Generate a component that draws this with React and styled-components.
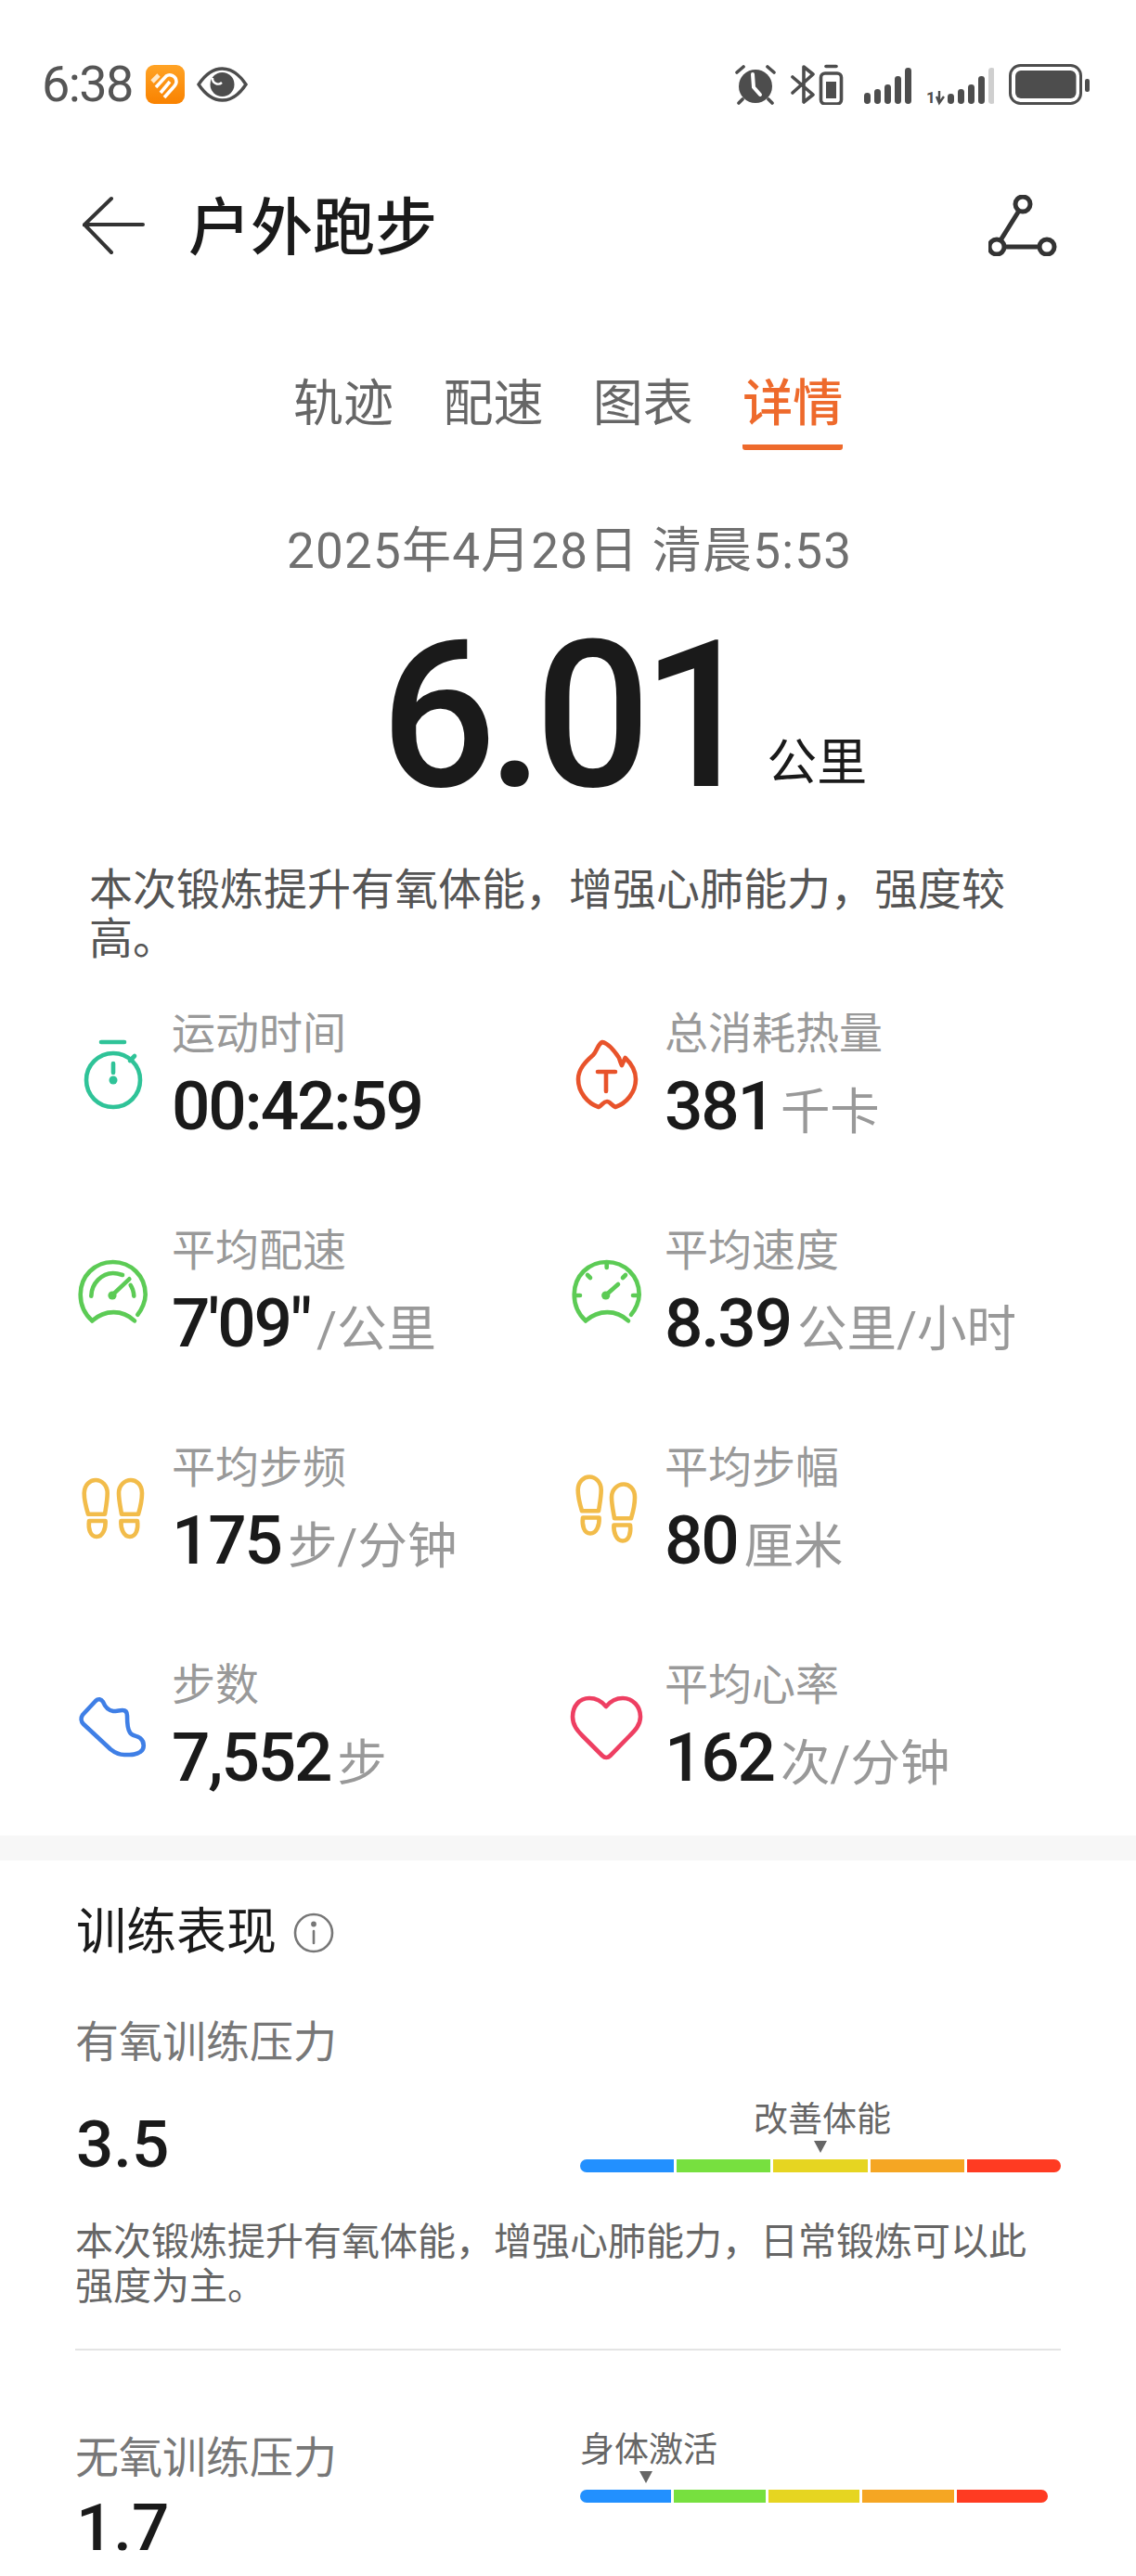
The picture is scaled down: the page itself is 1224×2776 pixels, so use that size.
import React from "react";
import styled, { createGlobalStyle } from "styled-components";

const Global = createGlobalStyle`
  html, body { margin: 0; padding: 0; background: #fff; }
  body { font-family: Roboto, "Noto Sans CJK SC", sans-serif; color: #1a1a1a; }
  * { box-sizing: border-box; }
`;
const Page = styled.div`
  width: 1224px; height: 2776px; overflow: hidden; background: #fff;
`;
const StatusBar = styled.div`
  height: 182px; padding: 0 49px 0 45px; display: flex; align-items: center; justify-content: space-between;
`;
const StatusGroup = styled.div`display: flex; align-items: center; gap: ${p => p.$gap}px;`;
const Time = styled.span`
  font-size: 54px; line-height: 60px; color: #555; letter-spacing: -1.6px; margin-right: 1px;
`;
const TopBar = styled.div`
  height: 122px; padding: 0 83px 0 89px; display: flex; align-items: center;
`;
const Title = styled.h1`
  margin: 0 0 0 47px; padding-top: 5px; font-size: 67px; line-height: 80px; font-weight: 500; color: #1a1a1a; flex: 1;
`;
const Tabs = styled.div`
  height: 181px; padding: 100px 0 0 316px; display: flex; gap: 53.4px; align-items: flex-start;
`;
const Tab = styled.div`
  font-size: 54px; line-height: 64px; height: 81px; white-space: nowrap;
  color: ${p => (p.$active ? "#EE6A2C" : "#666")};
  font-weight: ${p => (p.$active ? 500 : 400)};
  border-bottom: ${p => (p.$active ? "6px solid #EE6A2C" : "none")};
  border-radius: 0 0 3px 3px;
`;
const DateLine = styled.div`
  margin-top: 77px; padding-left: 309px; font-size: 53px; line-height: 64px; letter-spacing: 1.2px; color: #707070; white-space: nowrap;
`;
const Distance = styled.div`
  margin-top: 46px; height: 200px; padding-left: 410px; display: flex; align-items: flex-end;
`;
const DistanceValue = styled.span`
  font-size: 220px; line-height: 200px; font-weight: 500; letter-spacing: -10px; color: #1a1a1a;
`;
const DistanceUnit = styled.span`font-size: 54px; line-height: 60px; margin: 0 0 19px 20px; color: #1a1a1a;`;
const Summary = styled.p`
  margin: 60px 0 0; padding-left: 96px; width: 1100px; font-size: 47px; line-height: 53px; color: #555;
`;
const Metrics = styled.div`
  margin-top: 46px; padding-left: 82px; margin-bottom: 42px;
  display: grid; grid-template-columns: 531px 531px; grid-auto-rows: 150px; row-gap: 84px;
`;
const Metric = styled.div`display: flex; align-items: flex-start; gap: 23px;`;
const IconBox = styled.svg`
  width: 80px; height: 80px; margin-top: 35px; flex: none; overflow: visible;
  fill: none; stroke: ${p => p.$color}; stroke-width: 4.6; stroke-linecap: round; stroke-linejoin: round;
`;
const MetricText = styled.div`display: flex; flex-direction: column;`;
const MetricLabel = styled.div`font-size: 47px; line-height: 60px; color: #999; white-space: nowrap;`;
const MetricValueRow = styled.div`
  margin-top: 9px; height: 78px; display: flex; align-items: baseline; white-space: nowrap;
`;
const MetricValue = styled.span`font-size: 73px; line-height: 78px; font-weight: 500; color: #1a1a1a; letter-spacing: -2.2px;`;
const MetricUnit = styled.span`font-size: 53.5px; line-height: 60px; color: #999; margin-left: 7px;`;
const Band = styled.div`height: 27px; background: #f7f7f7;`;
const Section = styled.section`padding: 46px 81px 0;`;
const SectionTitle = styled.div`
  display: flex; align-items: center; gap: 18px; font-size: 54px; line-height: 64px; color: #1a1a1a; margin-left: 1px;
`;
const TrainLabel = styled.div`
  font-size: 47px; line-height: 60px; color: #777; white-space: nowrap; margin-top: ${p => p.$top || 0}px;
`;
const TrainRow = styled.div`
  display: flex; justify-content: space-between; align-items: flex-start;
  margin-top: ${p => p.$top}px; padding-right: ${p => p.$right}px;
`;
const TrainValue = styled.div`
  font-size: 71px; line-height: 90px; font-weight: 500; color: #1a1a1a; margin: ${p => p.$top || 0}px 0 0 1px;
`;
const TrainDesc = styled.p`
  margin: 36px 0 0; font-size: 41px; line-height: 48px; color: #666;
`;
const Divider = styled.hr`margin: 43px 0 0; border: 0; height: 1.5px; background: #e4e4e4;`;
const Gauge = styled.div`width: ${p => p.$w}px; flex: none;`;
const GaugeCaption = styled.div`
  font-size: 37px; line-height: 44px; color: #666; padding-left: ${p => p.$left}px; white-space: nowrap;
`;
const GaugeMark = styled.div`
  width: 0; height: 0; margin: ${p => p.$top}px 0 0 ${p => p.$left}px;
  border-left: 7px solid transparent; border-right: 7px solid transparent; border-top: 13px solid #666;
`;
const GaugeBar = styled.div`
  display: flex; gap: 3px; height: 14px; margin-top: 7px; border-radius: 7px; overflow: hidden;
`;
const Segment = styled.div`flex: 1; background: ${p => p.$c};`;

const Bar = () => (
  <GaugeBar>
    {["#2290FF", "#77E03F", "#E6D521", "#F5A623", "#FF3B22"].map(c => <Segment key={c} $c={c} />)}
  </GaugeBar>
);

const dark = "#4d4d4d";
const BackIcon = () => (
  <svg width="67" height="64" viewBox="0 0 67 64" fill="none" stroke="#333" strokeWidth="4" strokeLinecap="round" style={{ flex: "none" }}>
    <path d="M31 3 L2 31 H65 M2 31 L31 61" />
  </svg>
);
const RouteIcon = () => (
  <svg width="76" height="66" viewBox="0 0 76 66" fill="none" stroke="#333" strokeWidth="5">
    <circle cx="37" cy="10" r="8" /><circle cx="9" cy="56" r="8" /><circle cx="63" cy="56" r="8" />
    <path d="M33 17 L13 49 M17 56 H55" />
  </svg>
);
const AppIcon = () => (
  <svg width="42" height="42" viewBox="0 0 42 42">
    <defs><linearGradient id="ag" x1="0" y1="0" x2="0" y2="1"><stop offset="0" stopColor="#FFA325" /><stop offset="1" stopColor="#F98200" /></linearGradient></defs>
    <rect x="0" y="0" width="42" height="42" rx="9" fill="url(#ag)" />
    <g fill="none" stroke="#fff" strokeWidth="3.6">
      <path d="M7 18 L14 11" stroke="#FFE9C9" strokeWidth="4.6" />
      <path d="M11 24 L22 12 C26 9 33 12 33 18 C33 21 31 23 29 25 L20 35" />
      <path d="M16 30 L26 18" />
    </g>
  </svg>
);
const EyeIcon = () => (
  <svg width="55" height="38" viewBox="0 0 55 38">
    <path d="M2 19 C10 7 19 2 27.5 2 C36 2 45 7 53 19 C45 31 36 36 27.5 36 C19 36 10 31 2 19Z" fill="none" stroke={dark} strokeWidth="3.4" />
    <circle cx="27.5" cy="19" r="13" fill={dark} />
    <path d="M17 12 a6 6 0 0 0 10 5" fill="none" stroke="#fff" strokeWidth="2.4" />
  </svg>
);
const AlarmIcon = () => (
  <svg width="44" height="44" viewBox="0 0 44 44">
    <circle cx="22" cy="24" r="18" fill={dark} />
    <path d="M19 11 L20 25 L27 33" fill="none" stroke="#fff" strokeWidth="4" strokeLinecap="round" />
    <path d="M2 9 L9 3 M42 9 L35 3 M8 38 L4 42 M36 38 L40 42" stroke={dark} strokeWidth="3.6" strokeLinecap="round" />
  </svg>
);
const BtIcon = () => (
  <svg width="63" height="44" viewBox="0 0 63 44" fill="none" stroke={dark} strokeWidth="3.6" strokeLinecap="round" strokeLinejoin="round">
    <path d="M2 14 L24 33 L14 41 V3 L24 11 L2 31" />
    <rect x="32.5" y="10" width="22" height="33" rx="4.5" />
    <path d="M38 2.5 H49" />
    <rect x="38" y="19" width="11" height="18" fill={dark} stroke="none" />
  </svg>
);
const Signal = ({ heights, dim, lead }) => (
  <svg width={lead ? 73 : 51} height="50" viewBox={`0 0 ${lead ? 73 : 51} 50`}>
    {lead && (
      <>
        <text x="0" y="45" fontSize="17" fontWeight="700" fontFamily="Roboto" fill={dark}>1</text>
        <path d="M14 32 V45 M11 38 L14 45 L19 38" fill="none" stroke={dark} strokeWidth="2.4" />
      </>
    )}
    {heights.map((h, i) => (
      <rect key={i} x={(lead ? 23 : 0) + i * 11} y={46 - h} width="7" height={h} rx="3.4" fill={i === dim ? "#cfcfcf" : dark} />
    ))}
  </svg>
);
const BatteryIcon = () => (
  <svg width="88" height="44" viewBox="0 0 88 44">
    <rect x="1.5" y="1.5" width="76" height="41" rx="11" fill="none" stroke={dark} strokeWidth="3" />
    <rect x="7" y="7" width="65.5" height="30" rx="6" fill={dark} />
    <rect x="82" y="16" width="5" height="14" rx="2.2" fill={dark} />
  </svg>
);
const InfoIcon = () => (
  <svg width="44" height="44" viewBox="0 0 44 44" fill="none" stroke="#777" strokeWidth="2.6" strokeLinecap="round">
    <circle cx="22" cy="22" r="20" />
    <path d="M22 20 V33" />
    <circle cx="22" cy="12.5" r="1.6" fill="#777" />
  </svg>
);

const Stopwatch = () => (
  <IconBox viewBox="0 0 80 80" $color="#2FC398">
    <circle cx="40" cy="45" r="29" />
    <path d="M27 4 H52 M40 27 V37 M58 24 L63 19" />
    <circle cx="40" cy="45" r="4.5" fill="#2FC398" stroke="none" />
  </IconBox>
);
const Flame = () => (
  <IconBox viewBox="0 0 80 80" $color="#E8532B">
    <path d="M36 4 C42 5 50 15 54 21 C55 24 56 28 57 29 C58 27 59 24 60.7 21 C67 27 72 35 72 44 C72 58 62 70 50 74 C46 72 44 68 41 68 C37 68 36 72 32 74 C20 70 10 58 10 44 C10 33 18 25 26 18 C30 14 31 6 36 4 Z" />
    <path d="M31 36 H50 M40 36 V57" />
  </IconBox>
);
const GaugeOne = () => (
  <IconBox viewBox="0 0 80 80" $color="#5CCB55">
    <path d="M17.3 70.3 C8 62 4.7 52 4.7 42 C4.7 22 20 7 39.7 7 C59 7 74.7 22 74.7 42 C74.7 49 71 58 66.3 63.7" />
    <path d="M17.3 70.3 C31 58 50 58 63 70.3" />
    <path d="M16.3 43.7 C16.5 30 28 19 39.7 19 C43 19 47 20 50 21 M58.7 32 C60.8 35 62 39 62.3 43.7" />
    <path d="M39 42.7 L57.3 25.3" />
    <circle cx="39" cy="43" r="4.6" fill="#5CCB55" stroke="none" />
  </IconBox>
);
const GaugeTwo = () => (
  <IconBox viewBox="0 0 80 80" $color="#5CCB55">
    <path d="M18 70.3 C9 62 5.7 52 5.7 42 C5.7 22 21 7 40.7 7 C60 7 75.7 22 75.7 42 C75.7 49 72 58 67 63.7" />
    <path d="M18 70.3 C32 58 51 58 64 70.3" />
    <path d="M40.7 8 V13 M20 21 L23 24 M61 21 L58 24 M7 43 H12 M74 43 H69" />
    <path d="M39.7 42.7 L53 31" />
    <circle cx="39.7" cy="43" r="4.6" fill="#5CCB55" stroke="none" />
  </IconBox>
);
const Feet = ({ stagger }) => (
  <IconBox viewBox="0 0 80 80" $color="#F2BC4A">
    <g transform={stagger ? "translate(1 -3.5)" : undefined}>
      <path d="M13 44.7 C10 35 8.7 28 8.7 22 C9 13 15 8 21 8 C28 8 33.7 14 33.7 22 C33.7 30 32 38 31 44.7 Z" />
      <path d="M14 52 H31.6 C32 60 29 69 22 69 C15 69 13 60 14 52Z" />
    </g>
    <g transform={stagger ? "translate(0 4.5)" : undefined}>
      <path d="M49 44.7 C48 38 46 30 46 22 C46 14 52 8 59 8 C65 8 71 13 71 22 C71 28 70 35 67 44.7 Z" />
      <path d="M48.4 52 H66 C67 60 65 69 58 69 C51 69 48 60 48.4 52Z" />
    </g>
  </IconBox>
);
const Shoe = () => (
  <IconBox viewBox="0 0 80 80" $color="#3F7FE6">
    <path d="M7 27 L21 12 C24 9 27 10 29 13 C31 18 34 22 40 23 C44 23 47 22 50 22 C54 22 55 25 55 28 C55 35 55 42 58 46 C60 50 65 49 69 52 C74 56 74 64 69 67 C65 70 60 70 52 70 C46 70 42 68 37 64 L8 37 C5 34 5 30 7 27Z" />
  </IconBox>
);
const Heart = () => (
  <IconBox viewBox="0 0 80 80" $color="#EE3F62">
    <path d="M40 18 C35 12 29 9 22 9 C11 9 4 18 4 29 C4 38 9 44 15 50 L36 71 C38.5 73.5 42 73.5 44.5 71 L65 50 C71 44 77 38 77 29 C77 18 69 9 58 9 C51 9 45 12 40 18 Z" />
  </IconBox>
);

const metrics = [
  [<Stopwatch />, "运动时间", "00:42:59", ""],
  [<Flame />, "总消耗热量", "381", "千卡"],
  [<GaugeOne />, "平均配速", "7'09\"", "/公里"],
  [<GaugeTwo />, "平均速度", "8.39", "公里/小时"],
  [<Feet />, "平均步频", "175", "步/分钟"],
  [<Feet stagger />, "平均步幅", "80", "厘米"],
  [<Shoe />, "步数", "7,552", "步"],
  [<Heart />, "平均心率", "162", "次/分钟"],
];

export default function App() {
  return (
    <Page>
      <Global />
      <StatusBar>
        <StatusGroup $gap={13}>
          <Time>6:38</Time>
          <AppIcon />
          <EyeIcon />
        </StatusGroup>
        <StatusGroup $gap={16}>
          <AlarmIcon />
          <BtIcon />
          <Signal heights={[12, 16, 21, 30, 39]} />
          <Signal lead heights={[11, 16, 21, 30, 39]} dim={4} />
          <BatteryIcon />
        </StatusGroup>
      </StatusBar>
      <TopBar>
        <BackIcon />
        <Title>户外跑步</Title>
        <RouteIcon />
      </TopBar>
      <Tabs>
        <Tab>轨迹</Tab>
        <Tab>配速</Tab>
        <Tab>图表</Tab>
        <Tab $active>详情</Tab>
      </Tabs>
      <DateLine>2025年4月28日 清晨5:53</DateLine>
      <Distance>
        <DistanceValue>6.01</DistanceValue>
        <DistanceUnit>公里</DistanceUnit>
      </Distance>
      <Summary>{"本次锻炼提升有氧体能\uFF0C增强心肺能力\uFF0C强度较高。"}</Summary>
      <Metrics>
        {metrics.map(([icon, label, value, unit]) => (
          <Metric key={label}>
            {icon}
            <MetricText>
              <MetricLabel>{label}</MetricLabel>
              <MetricValueRow>
                <MetricValue>{value}</MetricValue>
                {unit && <MetricUnit>{unit}</MetricUnit>}
              </MetricValueRow>
            </MetricText>
          </Metric>
        ))}
      </Metrics>
      <Band />
      <Section>
        <SectionTitle>训练表现 <InfoIcon /></SectionTitle>
        <TrainLabel $top={56}>有氧训练压力</TrainLabel>
        <TrainRow $top={32} $right={0}>
          <TrainValue $top={3}>3.5</TrainValue>
          <Gauge $w={518}>
            <GaugeCaption $left={187}>改善体能</GaugeCaption>
            <GaugeMark $top={0} $left={252} />
            <Bar />
          </Gauge>
        </TrainRow>
        <TrainDesc>{"本次锻炼提升有氧体能\uFF0C增强心肺能力\uFF0C日常锻炼可以此强度为主。"}</TrainDesc>
        <Divider />
        <TrainRow $top={86} $right={14}>
          <div>
            <TrainLabel>无氧训练压力</TrainLabel>
            <TrainValue>1.7</TrainValue>
          </div>
          <Gauge $w={504}>
            <GaugeCaption $left={0}>身体激活</GaugeCaption>
            <GaugeMark $top={0} $left={64} />
            <Bar />
          </Gauge>
        </TrainRow>
      </Section>
    </Page>
  );
}
